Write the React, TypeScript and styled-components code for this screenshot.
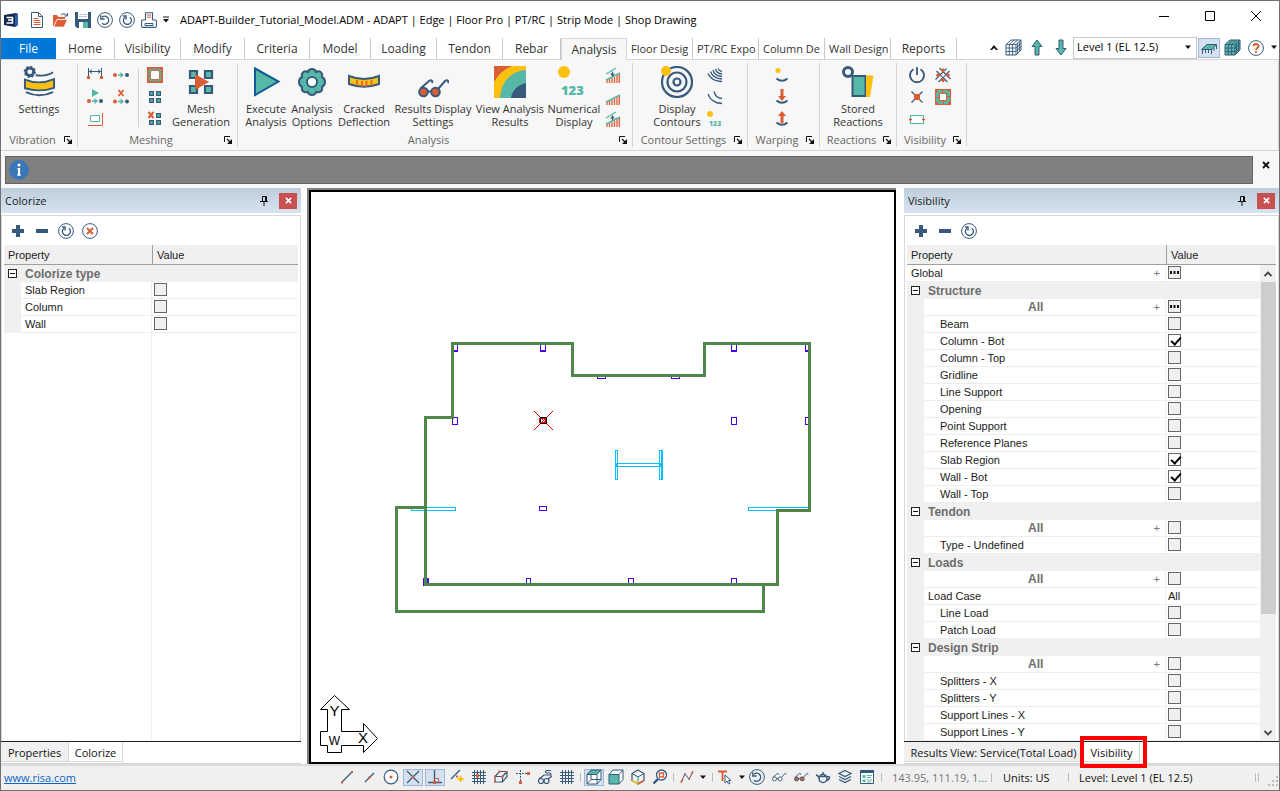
import React, { ReactNode } from "react";
import styled, { createGlobalStyle } from "styled-components";

const NAVY = "#36597c";
const TEAL = "#56b8a6";
const ORANGE = "#dc5c36";
const YELLOW = "#fdc010";

const GlobalStyle = createGlobalStyle`
  * { box-sizing: border-box; }
  body { margin: 0; background: #fff; }
  button, input, select { font: inherit; color: inherit; margin: 0; padding: 0; }
`;

/* ---------- shell ---------- */

const Window = styled.div`
  min-height: 100vh;
  display: flex;
  flex-direction: column;
  border: 1px solid #707070;
  background: #fff;
  font-family: "Open Sans", "Noto Sans", sans-serif;
  font-size: 11px;
  line-height: 13px;
  color: #333;
`;

const PlainButton = styled.button`
  border: 0;
  background: none;
  display: inline-flex;
  align-items: center;
  justify-content: center;
`;

const IconButton = styled(PlainButton)<{ $w?: number; $h?: number; $active?: boolean }>`
  width: ${(p) => p.$w ?? 22}px;
  height: ${(p) => p.$h ?? 22}px;
  flex: none;
  ${(p) =>
    p.$active &&
    "background: #d6e1f0; border: 1px solid #9db8dc; width: 20px; height: 17px; margin: 0 1px;"}
`;

type SvgProps = { s?: number; w?: number; h?: number; vb?: string; children: ReactNode };
const Svg = ({ s = 16, w, h, vb, children }: SvgProps) => (
  <svg width={w ?? s} height={h ?? s} viewBox={vb ?? `0 0 ${w ?? s} ${h ?? s}`} fill="none" aria-hidden="true">
    {children}
  </svg>
);

/* ---------- title bar ---------- */

const TitleBar = styled.header`
  height: 37px;
  display: flex;
  align-items: center;
  padding-left: 3px;
  color: #000;
`;
const Title = styled.h1`
  margin: 0 auto 0 8px;
  font-size: 11px;
  font-weight: 400;
  line-height: 16px;
  white-space: nowrap;
`;
const Logo = styled.span`
  width: 22px;
  display: flex;
`;
const WindowButton = styled(PlainButton)`
  width: 46px;
  height: 30px;
  margin-bottom: 7px;
`;

/* ---------- tab strip ---------- */

const TabStrip = styled.nav`
  display: flex;
  height: 21px;
  background: #fff;
`;
const RibbonTab = styled.button<{ $w: number; $kind?: "file" | "active" | "clipped" }>`
  width: ${(p) => p.$w}px;
  flex: none;
  border: 0;
  border-right: 1px solid #c8c8c8;
  background: none;
  overflow: hidden;
  white-space: nowrap;
  text-align: ${(p) => (p.$kind === "clipped" ? "left" : "center")};
  padding: 1px 0 0 ${(p) => (p.$kind === "clipped" ? 4 : 0)}px;
  font-size: 12px;
  font-size: ${(p) => (p.$kind === "clipped" ? 11 : 12)}px;
  ${(p) => p.$kind === "file" && "background: #0078d7; color: #fff; border: 0;"}
  ${(p) =>
    p.$kind === "active" &&
    "background: #f7f7f7; border: 1px solid #d5d5d5; border-bottom: 0; height: 22px; position: relative; padding-top: 0;"}
`;
const TabLabel = styled.span`
  display: block;
  line-height: 18px;
`;
const TabTools = styled.div`
  margin-left: auto;
  display: flex;
  align-items: center;
  height: 19px;
`;
const LevelBox = styled.div`
  display: grid;
  width: 124px;
  height: 22px;
  border: 1px solid #c8c8c8;
  align-items: center;
  > * { grid-area: 1 / 1; }
  > svg { justify-self: end; margin-right: 4px; pointer-events: none; }
`;
const LevelSelect = styled.select`
  appearance: none;
  border: 0;
  background: #fff;
  width: 100%;
  height: 20px;
  padding: 0 0 3px 3px;
  color: #000;
`;
const ToggleTool = styled(PlainButton)`
  width: 22px;
  height: 20px;
  margin-left: 1px;
  background: #d6e1f0;
  border: 1px solid #9db8dc;
`;

/* ---------- ribbon ---------- */

const Ribbon = styled.section`
  display: flex;
  height: 92px;
  background: #f7f7f7;
  border: 1px solid #d5d5d5;
  border-left: 0;
`;
const Group = styled.div<{ $w: number }>`
  width: ${(p) => p.$w}px;
  flex: none;
  margin: 3px 0;
  border-right: 1px solid #d5d5d5;
  display: flex;
  flex-direction: column;
`;
const GroupBody = styled.div<{ $pad: number }>`
  flex: 1;
  display: flex;
  padding: 1px 0 0 ${(p) => p.$pad}px;
`;
const GroupFooter = styled.div`
  height: 15px;
  display: flex;
  align-items: center;
  padding-right: 5px;
  color: #666;
  text-align: center;
  > span { flex: 1; white-space: nowrap; }
`;
const Launcher = styled(PlainButton)`
  width: 8px;
  height: 8px;
`;
const BigButton = styled.button<{ $w: number }>`
  width: ${(p) => p.$w}px;
  height: 66px;
  border: 0;
  background: none;
  display: flex;
  flex-direction: column;
  align-items: center;
  gap: 4px;
  padding-top: 2px;
  line-height: 13px;
  white-space: pre;
  svg { flex: none; }
`;
const SmallColumn = styled.div<{ $w?: number }>`
  width: ${(p) => p.$w ?? 26}px;
  display: flex;
  flex-direction: column;
`;
const Divider = styled.div`
  width: 1px;
  height: 58px;
  margin: 5px 4px 0;
  background: #d0d0d0;
`;

/* ---------- message bar ---------- */

const MessageRow = styled.div`
  display: flex;
  background: #f7f7f7;
  height: 37px;
  padding: 5px 5px 4px 4px;
  gap: 5px;
`;
const MessageBar = styled.div`
  flex: 1;
  display: flex;
  align-items: center;
  padding-left: 3px;
  background: #808080;
  border: 1px solid #646464;
`;
const MessageClose = styled(PlainButton)`
  width: 16px;
  height: 18px;
`;

/* ---------- work area ---------- */

const WorkArea = styled.main`
  flex: 1;
  display: flex;
  min-height: 576px;
`;
const Panel = styled.aside<{ $w: number }>`
  width: ${(p) => p.$w}px;
  flex: none;
  display: flex;
  flex-direction: column;
  color: #1b1b1b;
`;
const PanelTitle = styled.div`
  height: 25px;
  margin-bottom: 2px;
  display: flex;
  align-items: center;
  padding: 0 4px;
  background: linear-gradient(#bfcddb, #d6e4f1);
  > span { flex: 1; }
`;
const CloseButton = styled(PlainButton)`
  width: 18px;
  height: 16px;
  margin-left: 4px;
  background: #c75050;
`;
const PanelFrame = styled.div`
  flex: 1;
  display: flex;
  flex-direction: column;
  border: 1px solid #d9d9d9;
  border-bottom: 0;
  padding: 2px 2px 0;
`;
const PanelTools = styled.div`
  height: 27px;
  display: flex;
  align-items: center;
  padding: 0 0 1px 2px;
`;
const HeaderRow = styled.div<{ $name: number }>`
  display: grid;
  grid-template-columns: ${(p) => p.$name}px 1fr;
  height: 20px;
  background: #f0f0f0;
  border-bottom: 1px solid #a0a0a0;
  font: 11px/20px "Liberation Sans", Arial, sans-serif;
  > span { padding-left: 4px; }
  > span + span { border-left: 1px solid #a0a0a0; }
`;
const GridArea = styled.div<{ $split: number }>`
  flex: 1;
  display: flex;
  align-items: stretch;
  background: linear-gradient(#eee, #eee) ${(p) => p.$split}px 0 / 1px 100% no-repeat;
`;
const GridScroll = styled.div`
  flex: 1;
`;
const PropertyTable = styled.table`
  width: 100%;
  table-layout: fixed;
  border-collapse: separate;
  border-spacing: 0;
  font: 11px/16px "Liberation Sans", Arial, sans-serif;
  td, th { padding: 0; height: 17px; text-align: left; font-weight: 400; white-space: nowrap; }
`;
const Gutter = styled.td`
  background: #f0f0f0;
`;
const CategoryCell = styled.th`
  && { background: #f0f0f0; color: #6d6d6d; font-weight: 700; font-size: 12px; }
`;
const CategoryInner = styled.div`
  display: flex;
  align-items: center;
  gap: 8px;
  height: 17px;
  padding-left: 4px;
`;
const Expander = styled(PlainButton)`
  width: 9px;
  height: 9px;
  border: 1px solid #222;
  background: #fff;
`;
const NameCell = styled.th<{ $indent: number }>`
  && { padding-left: ${(p) => p.$indent}px; border-bottom: 1px solid #eee; }
`;
const ValueCell = styled.td`
  && { padding-left: 2px; border-left: 1px solid #eee; border-bottom: 1px solid #eee; }
  > * { vertical-align: top; margin-top: 1px; }
`;
const AllRow = styled.div<{ $bold: boolean }>`
  display: flex;
  align-items: center;
  height: 16px;
  padding-right: 5px;
  > span:first-child {
    flex: 1;
    ${(p) => p.$bold && "text-align: center; font-weight: 700; font-size: 12px; color: #6d6d6d; padding-right: 6px;"}
  }
  > span:last-child { color: #777; }
`;
const Check = styled.input`
  appearance: none;
  display: inline-block;
  width: 13px;
  height: 13px;
  border: 1px solid #666;
  background: #f0f0f0;
  &:checked { background: #fff; }
  &:checked::after {
    content: "";
    display: block;
    width: 4px;
    height: 8px;
    margin: 0 0 0 4px;
    border: solid #000;
    border-width: 0 2px 2px 0;
    transform: rotate(42deg);
  }
`;
const MixedButton = styled.button`
  width: 13px;
  height: 13px;
  border: 1px solid #666;
  background: #f0f0f0;
  display: inline-flex;
  align-items: center;
  justify-content: center;
`;
const ScrollBar = styled.div`
  width: 16px;
  display: flex;
  flex-direction: column;
  align-items: center;
  background: #f0f0f0;
`;
const Thumb = styled.div`
  width: 15px;
  height: 332px;
  background: #cdcdcd;
  margin-bottom: auto;
`;
const DockTabs = styled.div`
  display: flex;
  height: 23px;
  border-top: 1px solid #222;
  border-bottom: 1px solid #d5d5d5;
`;
const DockTab = styled.button<{ $active?: boolean; $w: number }>`
  position: relative;
  width: ${(p) => p.$w}px;
  height: 20px;
  padding-top: 2px;
  border: solid #d9d9d9;
  border-width: 0 1px 1px 0;
  background: ${(p) => (p.$active ? "#fff" : "#f0f0f0")};
  color: #111;
  white-space: nowrap;
`;
const Highlight = styled.span`
  position: absolute;
  inset: -6px -8px -7px -4px;
  border: 4px solid #f00;
  z-index: 2;
  pointer-events: none;
`;
const Canvas = styled.div`
  flex: 1;
  margin: 0 8px 0 6px;
  border: solid #808080;
  border-width: 2px 0 0 2px;
  display: flex;
`;
const CanvasInner = styled.div`
  flex: 1;
  border: 2px solid #000;
  display: grid;
  svg { width: 100%; height: 100%; display: block; }
`;

/* ---------- status bar ---------- */

const StatusBar = styled.footer`
  height: 26px;
  display: flex;
  align-items: center;
  padding: 0 0 2px 3px;
  background: #f0f0f0;
  border-top: 2px solid #dcdcdc;
  color: #111;
  white-space: nowrap;
`;
const SiteLink = styled.a`
  color: #0a63c9;
  margin-right: auto;
`;
const Bar = styled.span<{ $l?: number; $r?: number }>`
  width: 1px;
  height: 9px;
  margin: 0 ${(p) => p.$r ?? 2}px 0 ${(p) => p.$l ?? 3}px;
  background: #bdbdbd;
`;
const StatusText = styled.span<{ $w: number; $dim?: boolean }>`
  width: ${(p) => p.$w}px;
  flex: none;
  padding-left: 10px;
  color: ${(p) => (p.$dim ? "#777" : "#111")};
`;

/* ---------- icons ---------- */

const Caret = ({ up = false }: { up?: boolean }) => (
  <Svg w={8} h={5}>
    <path d={up ? "M0 5 4 0 8 5H6L4 3 2 5z" : "M1 0.5h6L4 4z"} fill="#111" />
  </Svg>
);
const RoundArrow = () => (
  <Svg>
    <g stroke={NAVY}>
      <circle cx="8" cy="8" r="7.4" />
      <path d="M5 5.2A4 4 0 1 1 5 11.2" strokeWidth="1.4" />
      <path d="M3.8 3.2V7H7.6" strokeWidth="1.3" />
    </g>
  </Svg>
);
const Refresh = () => (
  <Svg>
    <g stroke={NAVY}>
      <circle cx="8" cy="8" r="7.4" />
      <path d="M10.8 5.2A4 4 0 1 1 6 5.2" strokeWidth="1.3" />
      <path d="M4 4h3v3.4" strokeWidth="1.4" />
    </g>
  </Svg>
);
const AppLogo = () => (
  <Svg w={15} h={14}>
    <path d="M0 2 12 0 14 1V12L11 14 0 12z" fill="#14284d" />
    <path d="M11 1.5 14 1V12L11 14z" fill="#2f5fa5" />
    <path d="M2.5 4.5H8.5V7H4M8.5 7V10H2.5" stroke="#fff" strokeWidth="1.5" />
  </Svg>
);
const NewDoc = () => (
  <Svg>
    <path d="M2.5.5h7l4 4v11h-11z" fill="#fff" stroke={NAVY} />
    <path d="M9.5.5v4h4" stroke={NAVY} />
    <path d="M4.5 6.5h5M4.5 8.5h7M4.5 10.5h7M4.5 12.5h7" stroke={ORANGE} />
  </Svg>
);
const OpenFolder = () => (
  <Svg w={17} h={16}>
    <path d="M1 15V3h4l1.5 2H13v2H5z" fill={ORANGE} />
    <path d="M1.6 15 5 7.5h10.5L12 15z" fill={ORANGE} stroke="#fff" strokeWidth=".7" />
    <path d="M9 3c2-1.6 4-1.6 6 .5M15.5 1v3h-3" stroke={NAVY} />
  </Svg>
);
const SaveIcon = () => (
  <Svg>
    <path d="M0 0h16v16H2L0 14z" fill={NAVY} />
    <path d="M3 0h10v7H3z" fill="#fff" />
    <path d="M4 2.5h8M4 4.5h8" stroke="#b8c6d4" />
    <path d="M4 10h9v6H4z" fill="#fff" />
    <path d="M8 10h5v6H8z" fill={TEAL} />
  </Svg>
);
const PrintIcon = () => (
  <Svg>
    <path
      d="M4.5 8V.8h7V8M4.5 8H1.3A.8.8 0 0 0 .6 9v5c0 .8.5 1.4 1.3 1.4h12.2c.8 0 1.3-.6 1.3-1.4V9c0-.6-.4-1-1-1h-3"
      stroke={NAVY}
      strokeWidth="1.1"
    />
    <path d="M6 3h4M6 5.2h4" stroke={ORANGE} />
    <path d="M4 11.5h8v2H4z" stroke={NAVY} />
  </Svg>
);
const LauncherIcon = () => (
  <Svg s={8}>
    <path d="M.5 6V.5H6" stroke="#111" />
    <path d="M3 3 6 6" stroke="#111" strokeWidth="1.3" />
    <path d="M8 3v5H3z" fill="#111" />
  </Svg>
);
const WireCube = ({ fill = "#fff" }: { fill?: string }) => (
  <Svg s={17}>
    <path d="M1 5.5 6 1h10v10l-5 5H1z" fill={fill} stroke={NAVY} />
    <path
      d="M1 5.5h10M11 5.5V16M11 5.5 16 1M1 9h10l5-4.5M1 12.5h10l5-5M4.3 5.5V16M7.6 5.5V16M4.3 5.5l5-4.5M7.6 5.5l5-4.5M12.6 4v10.5M14.4 2.5v10"
      stroke={NAVY}
      strokeWidth=".9"
    />
  </Svg>
);
const LevelArrow = ({ down = false }: { down?: boolean }) => (
  <Svg w={12} h={17}>
    <path
      transform={down ? "rotate(180 6 8.5)" : undefined}
      d="M6 1 11 7.5H8V16H4V7.5H1z"
      fill={TEAL}
      stroke={NAVY}
    />
  </Svg>
);
const SlabIcon = () => (
  <Svg>
    <path d="M.5 9.5 6 4.500h9.5L11 9.500z" fill={TEAL} stroke={NAVY} />
    <path d="M1.500 10v4M4.500 10v3M7.500 10v3M10.500 10v4M13 8v3M15.500 5v4" stroke={NAVY} />
  </Svg>
);
const HelpIcon = () => (
  <Svg>
    <circle cx="8" cy="8" r="7.4" fill="#fff" stroke={NAVY} />
    <path d="M5.6 6.2a2.4 2.2 0 1 1 3.6 1.9C8.3 8.6 8 8.9 8 10" stroke={ORANGE} strokeWidth="1.9" />
    <path d="M7 11.2h2V13H7z" fill={ORANGE} />
  </Svg>
);
const VibrationIcon = () => (
  <Svg s={32} vb="0 0 33 33">
    <circle cx="7" cy="6" r="4" stroke={NAVY} strokeWidth="3" />
    <circle cx="7" cy="6" r="5.5" stroke={NAVY} strokeDasharray="2 2.3" strokeWidth="1.5" />
    <path d="M13 9.5c7 1 13 .5 18-3" stroke={NAVY} strokeWidth="2" />
    <path d="M2 14q14.500 6 30-.5v9q-15 5-30 .5z" fill={YELLOW} stroke={NAVY} strokeWidth="2" />
    <path d="M3 27q14 6.500 28 0" stroke={NAVY} strokeWidth="2" />
  </Svg>
);
const Dots = ({ y = 8 }: { y?: number }) => (
  <>
    <circle cx="2" cy={y} r="2" fill={ORANGE} />
    <path d={`M5 ${y}h5`} stroke={TEAL} strokeWidth="1.6" />
    <path d={`M7.500 ${y - 3}l3.500 3-3.500 3z`} fill={TEAL} />
    <circle cx="14" cy={y} r="2" fill={NAVY} />
  </>
);
const SpanIcon = () => (
  <Svg>
    <path
      d="M1.500 1v10M14.500 1v10M2 4.500h12M5 2.500l-2.500 2 2.500 2M11 2.500l2.500 2-2.500 2"
      stroke={NAVY}
    />
    <path d="M0 9h3v3H0zM13 9h3v3h-3z" fill={ORANGE} />
  </Svg>
);
const DotsIcon = () => (
  <Svg>
    <Dots />
  </Svg>
);
const RunDotsIcon = () => (
  <Svg>
    <path d="M5 0l7 4-7 4z" fill={TEAL} />
    <Dots y={12} />
  </Svg>
);
const ClearDotsIcon = () => (
  <Svg>
    <path d="M5.500 1l5 6M10.500 1l-5 6" stroke={ORANGE} strokeWidth="1.8" />
    <Dots y={12.5} />
  </Svg>
);
const OffsetRectIcon = () => (
  <Svg>
    <path d="M3.500 4.500h9v6h-9z" stroke={TEAL} fill="#fff" />
    <path d="M1 14.500h14.500V2" stroke={ORANGE} />
  </Svg>
);
const FrameIcon = ({ solid = false }: { solid?: boolean }) => (
  <Svg>
    <path d="M0 0h16v16H0z" fill={ORANGE} />
    <path
      d="M2.500 2.500h11v11h-11z"
      stroke={TEAL}
      strokeWidth={solid ? 3 : 2}
      strokeDasharray={solid ? "4.5 1" : "2 .75"}
    />
    <path d="M4.500 4.500h7v7h-7z" fill="#fff" stroke={solid ? ORANGE : "#fff"} />
  </Svg>
);
const FourSquares = ({ x = false }: { x?: boolean }) => (
  <Svg>
    <g fill={TEAL} stroke={NAVY} strokeWidth="1.2">
      {!x && <path d="M2.600 2.600h3.800v3.800H2.600z" />}
      <path d="M9.600 2.600h3.800v3.800H9.600zM2.600 9.600h3.800v3.800H2.600zM9.600 9.600h3.800v3.800H9.600z" />
    </g>
    {x && <path d="M1.500 1l5 6M6.500 1l-5 6" stroke={ORANGE} strokeWidth="2" />}
  </Svg>
);
const MeshIcon = () => (
  <Svg s={32}>
    <path d="M5 5h7v7H5zM20 5h7v7h-7zM5 20h7v7H5zM20 20h7v7h-7z" fill={TEAL} stroke={NAVY} strokeWidth="2.2" />
    <path d="M10 8l14 8-14 8z" fill={ORANGE} />
  </Svg>
);
const PlayIcon = () => (
  <Svg s={32}>
    <path d="M5 2.500 28.500 15.500 5 29z" fill={TEAL} stroke="#105d92" strokeWidth="2" />
  </Svg>
);
const GearIcon = () => (
  <Svg s={32}>
    <path
      d="M12 6c1-4 7-4 8 0 4-2 7 1 6 5 4 2 4 8 0 10 1 4-2 6-6 5-1 4-7 4-8 0-4 1-7-1-6-5-4-2-4-8 0-10-1-4 2-7 6-5z"
      fill={TEAL}
      stroke={NAVY}
      strokeWidth="2"
    />
    <circle cx="16" cy="16" r="5" fill="#fff" stroke={NAVY} strokeWidth="2" />
  </Svg>
);
const CrackIcon = () => (
  <Svg s={32}>
    <path d="M1 10q15 6 30 0v8q-15 5.500-30 0z" fill={YELLOW} stroke={NAVY} strokeWidth="2" />
    <path d="M9 14v6M14 15v6M18.500 15v6M23.500 14v6" stroke={ORANGE} strokeWidth="1.6" />
  </Svg>
);
const GlassesIcon = ({ lens = ORANGE }: { lens?: string }) => (
  <Svg s={32}>
    <circle cx="6.500" cy="26" r="4.300" fill={lens} stroke={NAVY} strokeWidth="2" />
    <circle cx="18.500" cy="26" r="4.300" fill={lens} stroke={NAVY} strokeWidth="2" />
    <path
      d="M10.800 25.500h3.400M3.500 22.500 12 15c2-1.500 4-.5 3 2M21.500 22.500 28 15c2-1.500 4-.5 3 2"
      stroke={NAVY}
      strokeWidth="2"
    />
  </Svg>
);
const RainbowIcon = () => (
  <Svg s={32}>
    <path d="M0 0h32v32H0z" fill={YELLOW} />
    <path d="M0 0h18Q7 4 0 16z" fill={ORANGE} />
    <path d="M6 32C7 16 17 5 32 4v28z" fill={TEAL} />
    <path d="M17 32c1-7 6-13 15-15v15z" fill={NAVY} />
  </Svg>
);
const NumericIcon = () => (
  <Svg s={32}>
    <circle cx="6" cy="6" r="6" fill={YELLOW} />
    <text x="3" y="29" fontFamily="Open Sans" fontSize="13" fontWeight="800" fill={TEAL}>
      123
    </text>
  </Svg>
);
const BarsIcon = ({ line = true, up = false }: { line?: boolean; up?: boolean }) => (
  <Svg>
    <path
      d="M2 16v-3M4.500 16v-4M7 16v-5M9.500 16v-6.500M12 16V8M14.300 16V7"
      stroke={ORANGE}
      strokeWidth="1.3"
    />
    <path d="M1 13 15 6" stroke={TEAL} strokeWidth="1.4" />
    {line && <path d="M1 7 11 1" stroke={TEAL} strokeWidth="1.4" />}
    {line && <path d="M7.500 4.500v5" stroke={NAVY} />}
    {line && <path d={up ? "M5 7.500h5L7.500 4.500z" : "M5 6.500h5L7.500 9.500z"} fill={NAVY} />}
  </Svg>
);
const TargetIcon = () => (
  <Svg s={32} vb="1 1 32 32">
    <g stroke={NAVY} strokeWidth="2.2">
      <circle cx="17" cy="17" r="15" />
      <circle cx="17" cy="17" r="9.500" />
      <circle cx="17" cy="17" r="3.500" />
    </g>
    <circle cx="6" cy="6" r="5" fill={YELLOW} />
  </Svg>
);
const ArcsIcon = ({ dense = false }: { dense?: boolean }) => (
  <Svg>
    <g stroke={NAVY} strokeWidth="1.3">
      {dense ? (
        <path d="M1 6.500Q4 14 15 14.500M3.500 4.500Q6 11.500 15 12M6 3Q7.500 9 15 9.500M8.500 2Q9.500 6.500 15 7M11 1.500Q12 4 15 4.500" />
      ) : (
        <path d="M1 5Q4 14 15 14.500M7 2.500Q8.500 9 15 9.500" />
      )}
    </g>
  </Svg>
);
const MiniNumeric = () => (
  <Svg>
    <circle cx="3" cy="3" r="3" fill={YELLOW} />
    <text x="2" y="15" fontFamily="Open Sans" fontSize="7" fontWeight="800" fill={TEAL}>
      123
    </text>
  </Svg>
);
const WarpIcon = ({ kind }: { kind: "dot" | "down" | "up" }) => (
  <Svg>
    <path d="M2.500 11.500q5.500 4.500 11 0" stroke={NAVY} strokeWidth="2" />
    {kind === "dot" && <circle cx="4" cy="3.500" r="2.500" fill={YELLOW} />}
    {kind === "down" && <path d="M6.500 0h3v7H12l-4 5-4-5h2.500z" fill={ORANGE} />}
    {kind === "up" && <path d="M6.500 12h3V5H12L8 0 4 5h2.500z" fill={ORANGE} />}
  </Svg>
);
const StoredIcon = () => (
  <Svg s={32}>
    <circle cx="6" cy="6" r="4.500" stroke={NAVY} strokeWidth="3" />
    <path d="M10.500 10h13v20h-13z" fill={TEAL} stroke={NAVY} strokeWidth="2" />
    <path d="M24 9.500h7.500L28 31h-4z" fill={YELLOW} />
  </Svg>
);
const PowerIcon = () => (
  <Svg>
    <path d="M4.500 2.200a7 7 0 1 0 7 0M8 0v8" stroke={NAVY} strokeWidth="1.800" />
  </Svg>
);
const CrossNodes = () => (
  <Svg>
    <path d="M1.500 4l11 11M14.500 4l-11 11M4.500 1l11 11M11.500 1.500l-11 11" stroke={NAVY} strokeWidth="1.100" />
    <path
      d="M8 1l2.200 2.200L8 5.400 5.800 3.200zM3 6l2.200 2.200L3 10.400.8 8.200zM13 6l2.200 2.200-2.200 2.200-2.200-2.200zM8 11l2.200 2.200L8 15.400l-2.200-2.200z"
      fill={ORANGE}
    />
    <path d="M8 6.500 9.700 8.200 8 9.900 6.300 8.200z" fill="#f7f7f7" />
  </Svg>
);
const CrossIcon = () => (
  <Svg>
    <path d="M2.500 2.500l11 11M13.500 2.500l-11 11" stroke={NAVY} strokeWidth="1.300" />
    <path d="M5 5h6v6H5z" fill={ORANGE} />
  </Svg>
);
const RectNodes = () => (
  <Svg>
    <path d="M1.500 4.500h13v8h-13z" fill="#fff" stroke={TEAL} strokeWidth="1.200" />
    <path d="M0 8.500h3M13 8.500h3M1.500 7v3M14.500 7v3" stroke={ORANGE} strokeWidth="1.200" />
  </Svg>
);
const InfoIcon = () => (
  <Svg s={20}>
    <circle cx="10" cy="10" r="10" fill="#3a76b8" />
    <path d="M10 8v7.500" stroke="#fff" strokeWidth="2.200" />
    <path d="M8.500 8.500H10M8 15h4" stroke="#fff" />
    <circle cx="10" cy="5" r="1.500" fill="#fff" />
  </Svg>
);
const CrossSmall = ({ s = 8, c = "#111" }: { s?: number; c?: string }) => (
  <Svg s={s} vb="0 0 8 8">
    <path d="M1 1l6 6M7 1 1 7" stroke={c} strokeWidth="1.800" />
  </Svg>
);
const PinIcon = () => (
  <Svg w={8} h={10}>
    <path d="M2.500 5.500v-5h4v5M0 5.500h8M4 6v4M5.500 1v5" stroke="#111" />
  </Svg>
);
const PlusIcon = () => (
  <Svg s={12}>
    <path d="M6 0v12M0 6h12" stroke={NAVY} strokeWidth="4" />
  </Svg>
);
const MinusIcon = () => (
  <Svg s={12}>
    <path d="M0 6h12" stroke={NAVY} strokeWidth="4" />
  </Svg>
);
const CancelIcon = () => (
  <Svg>
    <circle cx="8" cy="8" r="7.400" stroke={NAVY} />
    <path d="M5 5l6 6M11 5l-6 6" stroke={ORANGE} strokeWidth="2" />
  </Svg>
);

const LineIcon = ({ mid = false }: { mid?: boolean }) => (
  <Svg>
    <path d={mid ? "M4 13 13 4" : "M3 13 13 3"} stroke={NAVY} strokeWidth="1.200" />
    {mid ? (
      <circle cx="8.500" cy="8.500" r="1.200" fill={ORANGE} />
    ) : (
      <path d="M2 12.500h2v2H2zM12 2h2v2h-2z" fill={ORANGE} />
    )}
  </Svg>
);
const CircleDot = () => (
  <Svg>
    <circle cx="8" cy="8" r="6.800" fill="#fff" stroke={NAVY} strokeWidth="1.200" />
    <circle cx="8" cy="8" r="1.500" fill={ORANGE} />
  </Svg>
);
const SnapX = () => (
  <Svg>
    <path d="M2 2l12 12M14 2 2 14" stroke={NAVY} strokeWidth="1.300" />
    <path d="M6.800 6.800h2.400v2.400H6.800z" fill={ORANGE} />
  </Svg>
);
const Perp = () => (
  <Svg>
    <path d="M7.500 1v13M1 13.500h14" stroke={NAVY} strokeWidth="1.300" />
    <path d="M7.500 9.500h4v4" stroke={ORANGE} />
    <path d="M6 12h3v3H6z" fill={ORANGE} />
  </Svg>
);
const NearIcon = () => (
  <Svg>
    <path d="M2 10 11 1" stroke={NAVY} strokeWidth="1.200" />
    <path d="M7 6.500h2v2H7z" fill={ORANGE} />
    <path d="M11.500 7v6M8.500 10h6" stroke={YELLOW} strokeWidth="2" />
  </Svg>
);
const GridIcon = ({ dot = false }: { dot?: boolean }) => (
  <Svg>
    <path
      d="M3.500 1v14M6.500 1v14M9.500 1v14M12.500 1v14M1 3.500h14M1 6.500h14M1 9.500h14M1 12.500h14"
      stroke={NAVY}
    />
    {dot && <path d="M5 5h3v3H5z" fill={ORANGE} />}
  </Svg>
);
const BoxIcon = () => (
  <Svg>
    <path
      d="M2 7.500 6.500 2.500h7.500v5L9.500 13H2zM2 7.500h7.500V13M9.500 7.500 14 2.500"
      stroke={NAVY}
      strokeWidth="1.200"
    />
    <path
      d="M5.500 1.500h2v2h-2zM12.500 2h2v2h-2zM1 11.500h2v2H1zM8.500 6.500h2v2h-2zM1 6.500h2v2H1z"
      fill={ORANGE}
    />
  </Svg>
);
const OrthoIcon = () => (
  <Svg>
    <path d="M1 4.500h12M5.500 1v12" stroke={NAVY} strokeDasharray="2 1" />
    <path d="M12 3h3v3h-3zM4 12h3v3H4z" fill={ORANGE} />
  </Svg>
);
const ChainIcon = () => (
  <Svg>
    <circle cx="4" cy="12" r="2.500" stroke={NAVY} strokeWidth="1.200" />
    <circle cx="9.500" cy="12" r="2.500" stroke={NAVY} strokeWidth="1.200" />
    <path
      d="M2 10l5-4h6M11 10l4-3M14 1.500H9.500q-2 1 0 2.500H13q2 1.500 0 2.500"
      stroke={NAVY}
      strokeWidth="1.200"
    />
  </Svg>
);
const ViewCube = ({ top = false, front = false }: { top?: boolean; front?: boolean }) => (
  <Svg>
    <path d="M1 5.500 5 1h10v9.500L11 15H1z" fill="#fff" />
    {top && <path d="M1 5.500 5 1h10l-4 4.500z" fill={TEAL} />}
    {front && <path d="M1 5.500h10V15H1z" fill={TEAL} />}
    <path
      d={`M1 5.500 5 1h10v9.500L11 15H1zM1 5.500h10V15M11 5.500 15 1${front ? "" : "M5 5.500v5h10M5 10.500 1 15"}`}
      stroke={NAVY}
    />
  </Svg>
);
const IsoCube = () => (
  <Svg>
    <path d="M8 1l6 3.500v7L8 15l-6-3.500v-7z" stroke={NAVY} strokeWidth="1.200" />
    <path d="M2 4.500 8 8l6-3.500" stroke={NAVY} />
    <path d="M8 8v7" stroke={TEAL} strokeWidth="1.400" />
    <path d="M2 11.500 8 15" stroke={YELLOW} strokeWidth="1.500" />
    <path d="M8 15l6-3.500" stroke={ORANGE} strokeWidth="1.500" />
  </Svg>
);
const ZoomIcon = () => (
  <Svg>
    <circle cx="9.500" cy="6" r="5" fill="#fff" stroke={NAVY} strokeWidth="1.300" />
    <path d="M7.500 4h4v4h-4z" stroke={ORANGE} strokeWidth="1.500" />
    <path d="M6 10 1.500 14.500" stroke={NAVY} strokeWidth="2.400" />
  </Svg>
);
const PolyIcon = () => (
  <Svg>
    <path d="M2 13 6 5l4 5 4-7" stroke={NAVY} />
    <path d="M2 14l2-4M12 6l2-4M5 5h2M9 10h2" stroke={ORANGE} strokeWidth="1.300" />
  </Svg>
);
const PickIcon = () => (
  <Svg>
    <path d="M0 2.500h9M4.500 2.500V12" stroke={ORANGE} strokeWidth="1.800" />
    <path d="M7 6v8l2-2 1.500 3 1.500-1-1.500-2.500H13z" fill="#fff" stroke={NAVY} />
  </Svg>
);
const TeapotIcon = () => (
  <Svg>
    <path
      d="M4 7.500h8v2q-.5 4-4 4t-4-4zM1 6q2 0 3.500 4M12 8q3-1 2.500 1T11.500 11.500M5 7q3-3.500 6 0M8 3v1.500"
      stroke={NAVY}
      strokeWidth="1.400"
    />
  </Svg>
);
const LayersIcon = () => (
  <Svg>
    <path
      d="M8 1.500 14 4.500 8 7.500 2 4.500zM2 7.500l6 3 6-3M2 10.500l6 3 6-3"
      stroke={NAVY}
      strokeWidth="1.200"
    />
  </Svg>
);
const ReportIcon = () => (
  <Svg>
    <path d="M1.500 1.500h13v13h-13z" fill="#fff" stroke={NAVY} />
    <path d="M1 1h14v3H1z" fill={NAVY} />
    <path d="M3.500 6h3v3h-3zM3.500 10.500h3V13h-3z" fill={TEAL} />
    <path d="M8 6.500h5M8 8.500h4M8 11h5M8 13h4" stroke={TEAL} />
  </Svg>
);

/* ---------- ribbon pieces ---------- */

const Big = ({ w, icon, label }: { w: number; icon: ReactNode; label: string }) => (
  <BigButton $w={w}>
    {icon}
    <span>{label}</span>
  </BigButton>
);
const Small = ({ w, icons }: { w?: number; icons: [string, ReactNode][] }) => (
  <SmallColumn $w={w}>
    {icons.map(([name, icon]) => (
      <IconButton key={name} $w={w ?? 26} aria-label={name}>
        {icon}
      </IconButton>
    ))}
  </SmallColumn>
);
type GroupProps = { w: number; pad?: number; name: string; children: ReactNode };
const RibbonGroup = ({ w, pad = 0, name, children }: GroupProps) => (
  <Group $w={w}>
    <GroupBody $pad={pad}>{children}</GroupBody>
    <GroupFooter>
      <span>{name}</span>
      <Launcher aria-label={`${name} options`}>
        <LauncherIcon />
      </Launcher>
    </GroupFooter>
  </Group>
);

const TABS: [string, number, ("file" | "active" | "clipped")?][] = [
  ["File", 55, "file"],
  ["Home", 59],
  ["Visibility", 66],
  ["Modify", 64],
  ["Criteria", 65],
  ["Model", 61],
  ["Loading", 66],
  ["Tendon", 66],
  ["Rebar", 58],
  ["Analysis", 66, "active"],
  ["Floor Desig", 66, "clipped"],
  ["PT/RC Expo", 66, "clipped"],
  ["Column De", 66, "clipped"],
  ["Wall Design", 66, "clipped"],
  ["Reports", 66],
];

/* ---------- property grids ---------- */

type Row = {
  name: string;
  kind?: "category" | "all" | "root" | "group";
  value?: "mixed" | "text";
  checked?: boolean;
};

const item = (name: string, checked = false): Row => ({ name, checked });
const VISIBILITY_ROWS: Row[] = [
  { name: "Global", kind: "root", value: "mixed" },
  { name: "Structure", kind: "category" },
  { name: "All", kind: "all", value: "mixed" },
  item("Beam"),
  item("Column - Bot", true),
  item("Column - Top"),
  item("Gridline"),
  item("Line Support"),
  item("Opening"),
  item("Point Support"),
  item("Reference Planes"),
  item("Slab Region", true),
  item("Wall - Bot", true),
  item("Wall - Top"),
  { name: "Tendon", kind: "category" },
  { name: "All", kind: "all" },
  item("Type - Undefined"),
  { name: "Loads", kind: "category" },
  { name: "All", kind: "all" },
  { name: "Load Case", kind: "group", value: "text" },
  item("Line Load"),
  item("Patch Load"),
  { name: "Design Strip", kind: "category" },
  { name: "All", kind: "all" },
  item("Splitters - X"),
  item("Splitters - Y"),
  item("Support Lines - X"),
  item("Support Lines - Y"),
];
const COLORIZE_ROWS: Row[] = [
  { name: "Colorize type", kind: "category" },
  item("Slab Region"),
  item("Column"),
  item("Wall"),
];

const RowValue = ({ row }: { row: Row }) => {
  if (row.value === "text") return <>All</>;
  if (row.value === "mixed") {
    return (
      <MixedButton aria-label={row.name}>
        <Svg w={9} h={3}>
          <path d="M0 0h2v3H0zM3.500 0h2v3h-2zM7 0h2v3H7z" fill="#111" />
        </Svg>
      </MixedButton>
    );
  }
  return <Check type="checkbox" defaultChecked={row.checked} aria-label={row.name} />;
};

const NameCol = styled.col<{ $w: number }>`
  width: ${(p) => p.$w}px;
`;

const Grid = ({ rows, nameWidth, indent }: { rows: Row[]; nameWidth: number; indent: number }) => (
  <PropertyTable>
    <colgroup>
      <NameCol $w={17} />
      <NameCol $w={nameWidth} />
      <col />
    </colgroup>
    <tbody>
      {rows.map((row, i) => {
        if (row.kind === "category") {
          return (
            <tr key={i}>
              <CategoryCell colSpan={3} scope="rowgroup">
                <CategoryInner>
                  <Expander aria-label={`Collapse ${row.name}`}>
                    <Svg s={7}>
                      <path d="M1 3.500h5" stroke="#111" />
                    </Svg>
                  </Expander>
                  {row.name}
                </CategoryInner>
              </CategoryCell>
            </tr>
          );
        }
        const root = row.kind === "root";
        const all = row.kind === "all";
        const inset = root || row.kind === "group" ? 4 : all ? 0 : indent;
        return (
          <tr key={i}>
            {!root && <Gutter />}
            <NameCell scope="row" colSpan={root ? 2 : 1} $indent={inset}>
              {root || all ? (
                <AllRow $bold={all}>
                  <span>{row.name}</span>
                  <span>+</span>
                </AllRow>
              ) : (
                row.name
              )}
            </NameCell>
            <ValueCell>
              <RowValue row={row} />
            </ValueCell>
          </tr>
        );
      })}
    </tbody>
  </PropertyTable>
);

const PanelHead = ({ name }: { name: string }) => (
  <PanelTitle>
    <span>{name}</span>
    <IconButton aria-label="Pin">
      <PinIcon />
    </IconButton>
    <CloseButton aria-label="Close">
      <CrossSmall s={7} c="#fff" />
    </CloseButton>
  </PanelTitle>
);

/* ---------- floor plan ---------- */

const PURPLE = "#4a00f0";
const CYAN = "#00bfff";

const FloorPlan = () => (
  <svg viewBox="311 192 583 570" fill="none" role="img" aria-label="Floor plan">
    <g stroke={PURPLE} shapeRendering="crispEdges">
      {[452.5, 540.5, 731.5, 805.5].map((x) => (
        <path key={x} d={`M${x} 344v6.500h5V344M${x - 0.5} 351.500h6`} />
      ))}
      {[452.5, 731.5, 805.5].map((x) => (
        <path key={x} d={`M${x} 417.500h5v7h-5z`} />
      ))}
      <path d="M597.500 376v2.500h8V376M671.500 376v2.500h8V376M539.500 506.500h7v4h-7z" />
      <path d="M526.500 584v-5.500h4v5.500M628.500 584v-5.500h5v5.500M731.500 584v-5.500h5v5.500" />
      <path d="M423.500 578.500h5v7h-5zM427.500 579v6" />
    </g>
    <g stroke={CYAN} shapeRendering="crispEdges">
      <path d="M411.500 507.500h44v3h-44zM748.500 507.500h60v3h-60z" />
      <path d="M615.500 450.500h2v29h-2zM659.500 450.500h2v29h-2zM662.500 450v30M615.500 463.500h46v3h-46zM616.500 464v3M660.500 464v3" />
    </g>
    <path d="M534 411l19 19M553 411l-19 19" stroke="#d00" />
    <path d="M540.500 417.500h6v6h-6z" stroke="#000" shapeRendering="crispEdges" />
    <path d="M539.500 418.500h6v4h-6z" stroke="#d00" shapeRendering="crispEdges" />
    <g stroke="#4e874a" strokeWidth="3" strokeLinecap="square" shapeRendering="crispEdges">
      <path d="M452.500 343.500H572.500V375.500H704.500V343.500H809.500V510.500H777.500V584.500H425.500V417.500H452.500z" />
      <path d="M425.500 507.500H396.500V611.500H763.500V584.500" />
    </g>
    <path
      d="M334.500 695.500 320.500 709.500H327.500V731.500H320.500V745.500H327.500V752.500H341.500V745.500H363.500V752.500L377.500 738.500 363.500 723.500V731.500H341.500V709.500H349.500z"
      stroke="#000"
    />
    <g fill="#000" fontFamily="Liberation Sans, Arial, sans-serif" fontSize="15" textAnchor="middle">
      <text x="334.500" y="716">Y</text>
      <text x="334.500" y="745" fontSize="12">W</text>
      <text x="363" y="743">X</text>
    </g>
  </svg>
);

/* ---------- status tools ---------- */

const SNAP_TOOLS: [string, ReactNode, boolean?][] = [
  ["Snap to endpoint", <LineIcon />],
  ["Snap to midpoint", <LineIcon mid />],
  ["Snap to center", <CircleDot />],
  ["Snap to intersection", <SnapX />, true],
  ["Snap to perpendicular", <Perp />, true],
  ["Snap to nearest", <NearIcon />],
  ["Snap to grid", <GridIcon dot />],
  ["Snap to vertices", <BoxIcon />],
  ["Orthogonal", <OrthoIcon />],
  ["Drawing aids", <ChainIcon />],
  ["Grid settings", <GridIcon />],
];
const VIEW_TOOLS: [string, ReactNode, boolean?][] = [
  ["Top view", <ViewCube top />, true],
  ["Front view", <ViewCube front />],
  ["Isometric view", <IsoCube />],
  ["Zoom window", <ZoomIcon />],
];
const MiniGlasses = ({ lens }: { lens?: string }) => (
  <Svg s={16} vb="-1 5 34 34">
    <GlassesIcon lens={lens} />
  </Svg>
);
const DISPLAY_TOOLS: [string, ReactNode][] = [
  ["Reset view", <RoundArrow />],
  ["View settings", <MiniGlasses lens="#fff" />],
  ["Result settings", <MiniGlasses />],
  ["Render", <TeapotIcon />],
  ["Layers", <LayersIcon />],
  ["Report", <ReportIcon />],
];

const ToolRow = ({ tools }: { tools: [string, ReactNode, boolean?][] }) => (
  <>
    {tools.map(([name, icon, active]) => (
      <IconButton key={name} aria-label={name} $active={active}>
        {icon}
      </IconButton>
    ))}
  </>
);

export default function App() {
  return (
    <Window>
      <GlobalStyle />
      <TitleBar>
        <Logo><AppLogo /></Logo>
        <IconButton aria-label="New"><NewDoc /></IconButton>
        <IconButton $w={24} aria-label="Open"><OpenFolder /></IconButton>
        <IconButton aria-label="Save"><SaveIcon /></IconButton>
        <IconButton aria-label="Undo"><RoundArrow /></IconButton>
        <IconButton aria-label="Redo"><Refresh /></IconButton>
        <IconButton aria-label="Print"><PrintIcon /></IconButton>
        <IconButton $w={12} aria-label="Customize">
          <Svg w={6} h={7}>
            <path d="M0 1h6" stroke="#111" />
            <path d="M0 3h6L3 6.500z" fill="#111" />
          </Svg>
        </IconButton>
        <Title>ADAPT-Builder_Tutorial_Model.ADM - ADAPT | Edge | Floor Pro | PT/RC | Strip Mode | Shop Drawing</Title>
        <WindowButton aria-label="Minimize">
          <Svg s={10}><path d="M0 5.500h10" stroke="#000" /></Svg>
        </WindowButton>
        <WindowButton aria-label="Maximize">
          <Svg s={10}><path d="M.5.5h9v9h-9z" stroke="#000" /></Svg>
        </WindowButton>
        <WindowButton aria-label="Close">
          <Svg s={10}><path d="M0 0l10 10M10 0 0 10" stroke="#000" /></Svg>
        </WindowButton>
      </TitleBar>

      <TabStrip>
        {TABS.map(([name, w, kind]) => (
          <RibbonTab key={name} $w={w} $kind={kind}>
            <TabLabel>{name}</TabLabel>
          </RibbonTab>
        ))}
        <TabTools>
          <IconButton $w={14} aria-label="Collapse ribbon"><Caret up /></IconButton>
          <IconButton $w={24} aria-label="Levels"><WireCube /></IconButton>
          <IconButton $w={24} aria-label="Level up"><LevelArrow /></IconButton>
          <IconButton $w={24} aria-label="Level down"><LevelArrow down /></IconButton>
          <LevelBox>
            <LevelSelect aria-label="Active level" defaultValue="1">
              <option value="1">Level 1 (EL 12.5)</option>
            </LevelSelect>
            <Caret />
          </LevelBox>
          <ToggleTool aria-label="Single level"><SlabIcon /></ToggleTool>
          <IconButton $w={24} aria-label="Multi level"><WireCube fill={TEAL} /></IconButton>
          <IconButton $w={24} aria-label="Help"><HelpIcon /></IconButton>
          <IconButton $w={11} aria-label="Help options"><Caret /></IconButton>
        </TabTools>
      </TabStrip>

      <Ribbon>
        <RibbonGroup w={77} name="Vibration">
          <Big w={77} icon={<VibrationIcon />} label="Settings" />
        </RibbonGroup>
        <RibbonGroup w={160} pad={4} name="Meshing">
          <Small icons={[["Mesh span", <SpanIcon />], ["Run nodes", <RunDotsIcon />], ["Offset", <OffsetRectIcon />]]} />
          <Small icons={[["Shift nodes", <DotsIcon />], ["Clear shift", <ClearDotsIcon />]]} />
          <Divider />
          <Small
            w={24}
            icons={[["Frame", <FrameIcon />], ["Elements", <FourSquares />], ["Delete elements", <FourSquares x />]]}
          />
          <Big w={68} icon={<MeshIcon />} label={"Mesh\nGeneration"} />
        </RibbonGroup>
        <RibbonGroup w={395} pad={5} name="Analysis">
          <Big w={46} icon={<PlayIcon />} label={"Execute\nAnalysis"} />
          <Big w={46} icon={<GearIcon />} label={"Analysis\nOptions"} />
          <Big w={58} icon={<CrackIcon />} label={"Cracked\nDeflection"} />
          <Big w={80} icon={<GlassesIcon />} label={"Results Display\nSettings"} />
          <Big w={74} icon={<RainbowIcon />} label={"View Analysis\nResults"} />
          <Big w={54} icon={<NumericIcon />} label={"Numerical\nDisplay"} />
          <Small
            w={24}
            icons={[["Scale down", <BarsIcon />], ["Bars", <BarsIcon line={false} />], ["Scale up", <BarsIcon up />]]}
          />
        </RibbonGroup>
        <RibbonGroup w={115} pad={18} name="Contour Settings">
          <Big w={52} icon={<TargetIcon />} label={"Display\nContours"} />
          <Small
            w={24}
            icons={[["More contours", <ArcsIcon dense />], ["Fewer contours", <ArcsIcon />], ["Contour values", <MiniNumeric />]]}
          />
        </RibbonGroup>
        <RibbonGroup w={72} pad={21} name="Warping">
          <Small
            icons={[["Warp point", <WarpIcon kind="dot" />], ["Warp down", <WarpIcon kind="down" />], ["Warp up", <WarpIcon kind="up" />]]}
          />
        </RibbonGroup>
        <RibbonGroup w={77} name="Reactions">
          <Big w={76} icon={<StoredIcon />} label={"Stored\nReactions"} />
        </RibbonGroup>
        <RibbonGroup w={70} pad={7} name="Visibility">
          <Small icons={[["Toggle", <PowerIcon />], ["Node", <CrossIcon />], ["Release", <RectNodes />]]} />
          <Small icons={[["All nodes", <CrossNodes />], ["Mesh frame", <FrameIcon solid />]]} />
        </RibbonGroup>
      </Ribbon>

      <MessageRow>
        <MessageBar><InfoIcon /></MessageBar>
        <MessageClose aria-label="Dismiss"><CrossSmall /></MessageClose>
      </MessageRow>

      <WorkArea>
        <Panel $w={300}>
          <PanelHead name="Colorize" />
          <PanelFrame>
            <PanelTools>
              <IconButton $w={24} aria-label="Expand all"><PlusIcon /></IconButton>
              <IconButton $w={24} aria-label="Collapse all"><MinusIcon /></IconButton>
              <IconButton $w={24} aria-label="Refresh"><Refresh /></IconButton>
              <IconButton $w={24} aria-label="Cancel"><CancelIcon /></IconButton>
            </PanelTools>
            <HeaderRow $name={148}>
              <span>Property</span>
              <span>Value</span>
            </HeaderRow>
            <GridArea $split={147}>
              <GridScroll>
                <Grid rows={COLORIZE_ROWS} nameWidth={130} indent={4} />
              </GridScroll>
            </GridArea>
          </PanelFrame>
          <DockTabs>
            <DockTab $w={68}>Properties</DockTab>
            <DockTab $w={54} $active>Colorize</DockTab>
          </DockTabs>
        </Panel>

        <Canvas>
          <CanvasInner><FloorPlan /></CanvasInner>
        </Canvas>

        <Panel $w={375}>
          <PanelHead name="Visibility" />
          <PanelFrame>
            <PanelTools>
              <IconButton $w={24} aria-label="Expand all"><PlusIcon /></IconButton>
              <IconButton $w={24} aria-label="Collapse all"><MinusIcon /></IconButton>
              <IconButton $w={24} aria-label="Refresh"><Refresh /></IconButton>
            </PanelTools>
            <HeaderRow $name={259}>
              <span>Property</span>
              <span>Value</span>
            </HeaderRow>
            <GridArea $split={258}>
              <GridScroll>
                <Grid rows={VISIBILITY_ROWS} nameWidth={241} indent={16} />
              </GridScroll>
              <ScrollBar>
                <IconButton $w={16} $h={17} aria-label="Scroll up">
                  <Svg w={8} h={6}><path d="M.5 5 4 1.500 7.500 5" stroke="#444" strokeWidth="1.800" /></Svg>
                </IconButton>
                <Thumb />
                <IconButton $w={16} $h={17} aria-label="Scroll down">
                  <Svg w={8} h={6}><path d="M.5 1 4 4.500 7.500 1" stroke="#444" strokeWidth="1.800" /></Svg>
                </IconButton>
              </ScrollBar>
            </GridArea>
          </PanelFrame>
          <DockTabs>
            <DockTab $w={180}>Results View: Service(Total Load)</DockTab>
            <DockTab $w={56} $active>
              Visibility
              <Highlight />
            </DockTab>
          </DockTabs>
        </Panel>
      </WorkArea>

      <StatusBar>
        <SiteLink href="https://www.risa.com">www.risa.com</SiteLink>
        <ToolRow tools={SNAP_TOOLS} />
        <Bar $l={2} $r={2} />
        <ToolRow tools={VIEW_TOOLS} />
        <Bar $l={2} />
        <IconButton aria-label="Polyline"><PolyIcon /></IconButton>
        <IconButton $w={9} aria-label="Polyline options"><Caret /></IconButton>
        <Bar $l={5} />
        <IconButton aria-label="Pick"><PickIcon /></IconButton>
        <IconButton $w={9} aria-label="Pick options"><Caret /></IconButton>
        <ToolRow tools={DISPLAY_TOOLS} />
        <Bar $r={0} />
        <StatusText $w={109} $dim>143.95, 111.19, 1...</StatusText>
        <Bar $l={0} $r={1} />
        <StatusText $w={75}>Units: US</StatusText>
        <Bar $l={0} $r={0} />
        <StatusText $w={186}>Level: Level 1 (EL 12.5)</StatusText>
        <Bar $l={0} $r={2} />
        <Bar $l={0} $r={8} />
        <Svg w={12} h={18}>
          <path d="M9 8h2v2H9zM9 12h2v2H9zM5 12h2v2H5zM9 16h2v2H9zM5 16h2v2H5zM1 16h2v2H1z" fill="#bbb" />
        </Svg>
      </StatusBar>
    </Window>
  );
}
